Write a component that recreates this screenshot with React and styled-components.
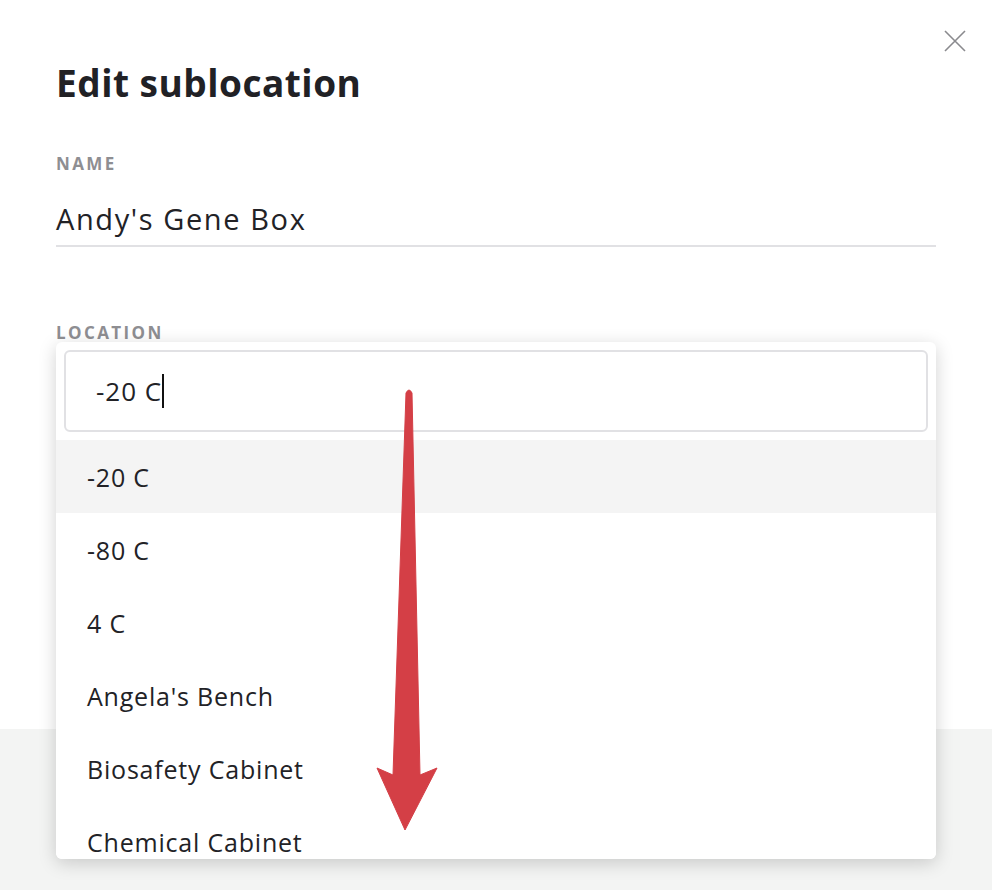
import React from 'react'
import styled, { createGlobalStyle } from 'styled-components'

const GlobalStyle = createGlobalStyle`
  html, body {
    margin: 0;
    padding: 0;
    background: #ffffff;
    font-family: "Open Sans", "Lato", sans-serif;
    color: #222226;
  }
  * { box-sizing: border-box; }
`

const options = ['-20 C', '-80 C', '4 C', "Angela's Bench", 'Biosafety Cabinet', 'Chemical Cabinet']

function Arrow() {
  return (
    <ArrowSvg width="80" height="460" viewBox="0 0 80 460">
      <path
        d="M36 6 Q39 0 42 6 L50 388 L67 381 L35 443 L7 381 L23 388 Z"
        fill="#d43f46"
        stroke="#d43f46"
        strokeWidth="1"
        strokeLinejoin="round"
      />
    </ArrowSvg>
  )
}

function App() {
  return (
    <>
      <GlobalStyle />
      <Modal>
        <Body>
          <Close aria-label="close">
            <svg width="24" height="24" viewBox="0 0 24 24">
              <path d="M2 2 L22 22 M22 2 L2 22" stroke="#8a8a8e" strokeWidth="1.6" />
            </svg>
          </Close>
          <Title>Edit sublocation</Title>
          <Field>
            <Label>Name</Label>
            <Value>Andy's Gene Box</Value>
          </Field>
          <LocationField>
            <Label>Location</Label>
            <Dropdown>
              <SearchWrap>
                <Search>-20 C<Caret /></Search>
              </SearchWrap>
              <List>
                {options.map((o, i) => (
                  <Option key={o} active={i === 0}>{o}</Option>
                ))}
              </List>
            </Dropdown>
            <Arrow />
          </LocationField>
        </Body>
        <Footer />
      </Modal>
    </>
  )
}

const Modal = styled.div`
  width: 992px;
  height: 890px;
  display: flex;
  flex-direction: column;
  overflow: hidden;
`

const Body = styled.div`
  position: relative;
  height: 729px;
  padding: 60px 56px 0 56px;
  background: #ffffff;
`

const Close = styled.div`
  position: absolute;
  top: 29px;
  right: 25px;
  width: 24px;
  height: 24px;
`

const Title = styled.h1`
  margin: 0;
  font-size: 37px;
  font-weight: 700;
  line-height: 46px;
  letter-spacing: 0.5px;
  color: #212125;
`

const Field = styled.div`
  margin-top: 48px;
  width: 880px;
`

const Label = styled.div`
  font-size: 17px;
  font-weight: 700;
  letter-spacing: 2.4px;
  text-transform: uppercase;
  color: #8e8e92;
  line-height: 20px;
`

const Value = styled.div`
  margin-top: 26px;
  font-size: 29px;
  line-height: 38px;
  letter-spacing: 1.6px;
  padding-bottom: 7px;
  border-bottom: 2px solid #e1e1e4;
  color: #222226;
`

const LocationField = styled.div`
  position: relative;
  margin-top: 76px;
  width: 880px;
`

const Dropdown = styled.div`
  position: absolute;
  top: 19px;
  left: 0;
  width: 880px;
  height: 517px;
  background: #ffffff;
  border-radius: 6px;
  box-shadow: 0 4px 18px rgba(0, 0, 0, 0.18);
  overflow: hidden;
  z-index: 2;
`

const SearchWrap = styled.div`
  padding: 8px;
`

const Search = styled.div`
  height: 82px;
  border: 2px solid #e1e1e4;
  border-radius: 6px;
  padding-left: 30px;
  display: flex;
  align-items: center;
  font-size: 26px;
  letter-spacing: 1px;
  color: #222226;
`

const Caret = styled.span`
  display: inline-block;
  width: 2px;
  height: 34px;
  margin-left: 0;
  background: #111;
`

const List = styled.div`
  display: flex;
  flex-direction: column;
`

const Option = styled.div`
  height: 73px;
  flex-shrink: 0;
  display: flex;
  align-items: center;
  padding-left: 31px;
  font-size: 25px;
  letter-spacing: 0.8px;
  color: #222226;
  background: ${p => (p.active ? '#f4f4f4' : '#ffffff')};
`

const ArrowSvg = styled.svg`
  position: absolute;
  left: 314px;
  top: 64px;
  z-index: 3;
`

const Footer = styled.div`
  flex: 1;
  background: #f3f4f3;
`

export default App
